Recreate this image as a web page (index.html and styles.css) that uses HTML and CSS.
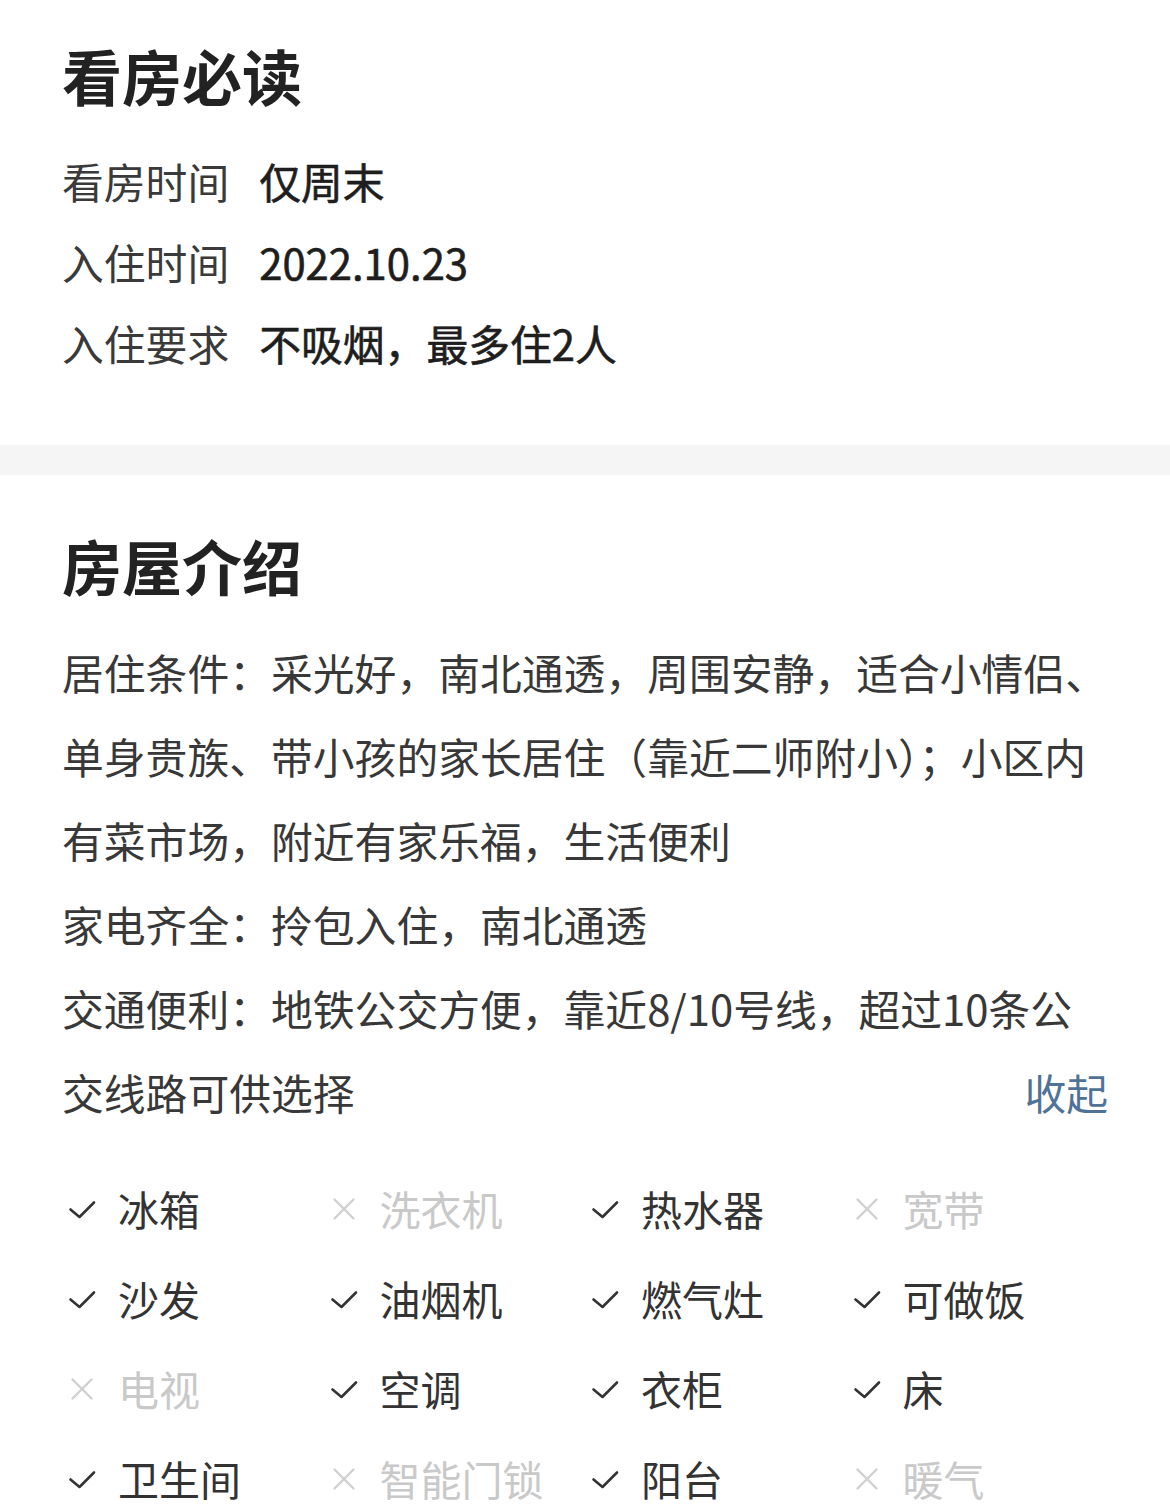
FILE: index.html
```html
<!DOCTYPE html>
<html lang="zh-CN">
  <head>
    <meta charset="utf-8">
    <title>房源详情</title>
    <link rel="stylesheet" href="styles.css">
  </head>
  <body>

    <!-- viewing notes -->
    <section class="block">
      <h2 class="block-title">看房必读</h2>
      <div class="info-row">
        <span class="info-label">看房时间</span>
        <span class="info-value">仅周末</span>
      </div>
      <div class="info-row">
        <span class="info-label">入住时间</span>
        <span class="info-value">2022.10.23</span>
      </div>
      <div class="info-row">
        <span class="info-label">入住要求</span>
        <span class="info-value">不吸烟，最多住2人</span>
      </div>
    </section>

    <div class="divider"></div>

    <!-- house description -->
    <section class="block">
      <h2 class="block-title">房屋介绍</h2>
      <div class="desc">
        <p>居住条件：采光好，南北通透，周围安静，适合小情侣、单身贵族、带小孩的家长居住（靠近二师附小）；小区内有菜市场，附近有家乐福，生活便利</p>
        <p>家电齐全：拎包入住，南北通透</p>
        <p><span>交通便利：地铁公交方便，靠近8/10号线，超过10条公</span><span>交线路可供选择</span><a class="toggle" href="#">收起</a></p>
      </div>

      <ul class="facilities">
        <li class="yes"><svg class="mark" viewBox="0 0 32 32"><path d="M4.5 17.5 L13.5 25 L28 10.5"/></svg>冰箱</li>
        <li class="no"><svg class="mark" viewBox="0 0 32 32"><path d="M6.5 7.5 L25.5 26.5 M25.5 7.5 L6.5 26.5"/></svg>洗衣机</li>
        <li class="yes"><svg class="mark" viewBox="0 0 32 32"><path d="M4.5 17.5 L13.5 25 L28 10.5"/></svg>热水器</li>
        <li class="no"><svg class="mark" viewBox="0 0 32 32"><path d="M6.5 7.5 L25.5 26.5 M25.5 7.5 L6.5 26.5"/></svg>宽带</li>

        <li class="yes"><svg class="mark" viewBox="0 0 32 32"><path d="M4.5 17.5 L13.5 25 L28 10.5"/></svg>沙发</li>
        <li class="yes"><svg class="mark" viewBox="0 0 32 32"><path d="M4.5 17.5 L13.5 25 L28 10.5"/></svg>油烟机</li>
        <li class="yes"><svg class="mark" viewBox="0 0 32 32"><path d="M4.5 17.5 L13.5 25 L28 10.5"/></svg>燃气灶</li>
        <li class="yes"><svg class="mark" viewBox="0 0 32 32"><path d="M4.5 17.5 L13.5 25 L28 10.5"/></svg>可做饭</li>

        <li class="no"><svg class="mark" viewBox="0 0 32 32"><path d="M6.5 7.5 L25.5 26.5 M25.5 7.5 L6.5 26.5"/></svg>电视</li>
        <li class="yes"><svg class="mark" viewBox="0 0 32 32"><path d="M4.5 17.5 L13.5 25 L28 10.5"/></svg>空调</li>
        <li class="yes"><svg class="mark" viewBox="0 0 32 32"><path d="M4.5 17.5 L13.5 25 L28 10.5"/></svg>衣柜</li>
        <li class="yes"><svg class="mark" viewBox="0 0 32 32"><path d="M4.5 17.5 L13.5 25 L28 10.5"/></svg>床</li>

        <li class="yes"><svg class="mark" viewBox="0 0 32 32"><path d="M4.5 17.5 L13.5 25 L28 10.5"/></svg>卫生间</li>
        <li class="no"><svg class="mark" viewBox="0 0 32 32"><path d="M6.5 7.5 L25.5 26.5 M25.5 7.5 L6.5 26.5"/></svg>智能门锁</li>
        <li class="yes"><svg class="mark" viewBox="0 0 32 32"><path d="M4.5 17.5 L13.5 25 L28 10.5"/></svg>阳台</li>
        <li class="no"><svg class="mark" viewBox="0 0 32 32"><path d="M6.5 7.5 L25.5 26.5 M25.5 7.5 L6.5 26.5"/></svg>暖气</li>
      </ul>
    </section>

  </body>
</html>
```

FILE: styles.css
```css
  body {
    margin: 0;
    background: #ffffff;
    color: #333333;
    font-family: "Noto Sans CJK SC", "Noto Sans", sans-serif;
  }

  .block {
    padding: 35px 62px 61px 62px;
  }

  .block + .divider + .block {
    padding-top: 50px;
    padding-bottom: 0;
  }

  .divider {
    height: 30px;
    background: #f5f5f5;
  }

  .block-title {
    margin: 0 0 26px 0;
    font-size: 60px;
    line-height: 80px;
    font-weight: 700;
    color: #222222;
  }

  .block + .divider + .block .block-title {
    margin-bottom: 25px;
  }

  .info-row {
    display: flex;
    font-size: 41.8px;
    line-height: 81px;
  }

  .info-label {
    margin-right: 30px;
    color: #3a3a3a;
  }

  .info-value {
    color: #1e1e1e;
    -webkit-text-stroke: 0.6px #1e1e1e;
  }

  .desc {
    font-size: 41.8px;
    line-height: 84px;
    color: #383838;
  }

  .desc p {
    margin: 0;
  }

  .toggle {
    float: right;
    color: #4f7398;
    text-decoration: none;
  }

  .facilities {
    list-style: none;
    margin: 29px 0 0 0;
    padding: 0;
    display: grid;
    grid-template-columns: repeat(4, 1fr);
  }

  .facilities li {
    display: flex;
    align-items: center;
    height: 90px;
    font-size: 41px;
  }

  .mark {
    width: 32px;
    height: 32px;
    margin: 0 20px 0 4px;
    fill: none;
    stroke-width: 2.6;
    stroke-linecap: round;
    stroke-linejoin: round;
  }

  .yes {
    color: #333333;
  }

  .yes .mark {
    stroke: #333333;
  }

  .no {
    color: #c9c9c9;
  }

  .no .mark {
    stroke: #d0d0d0;
    stroke-width: 2.4;
  }
```
